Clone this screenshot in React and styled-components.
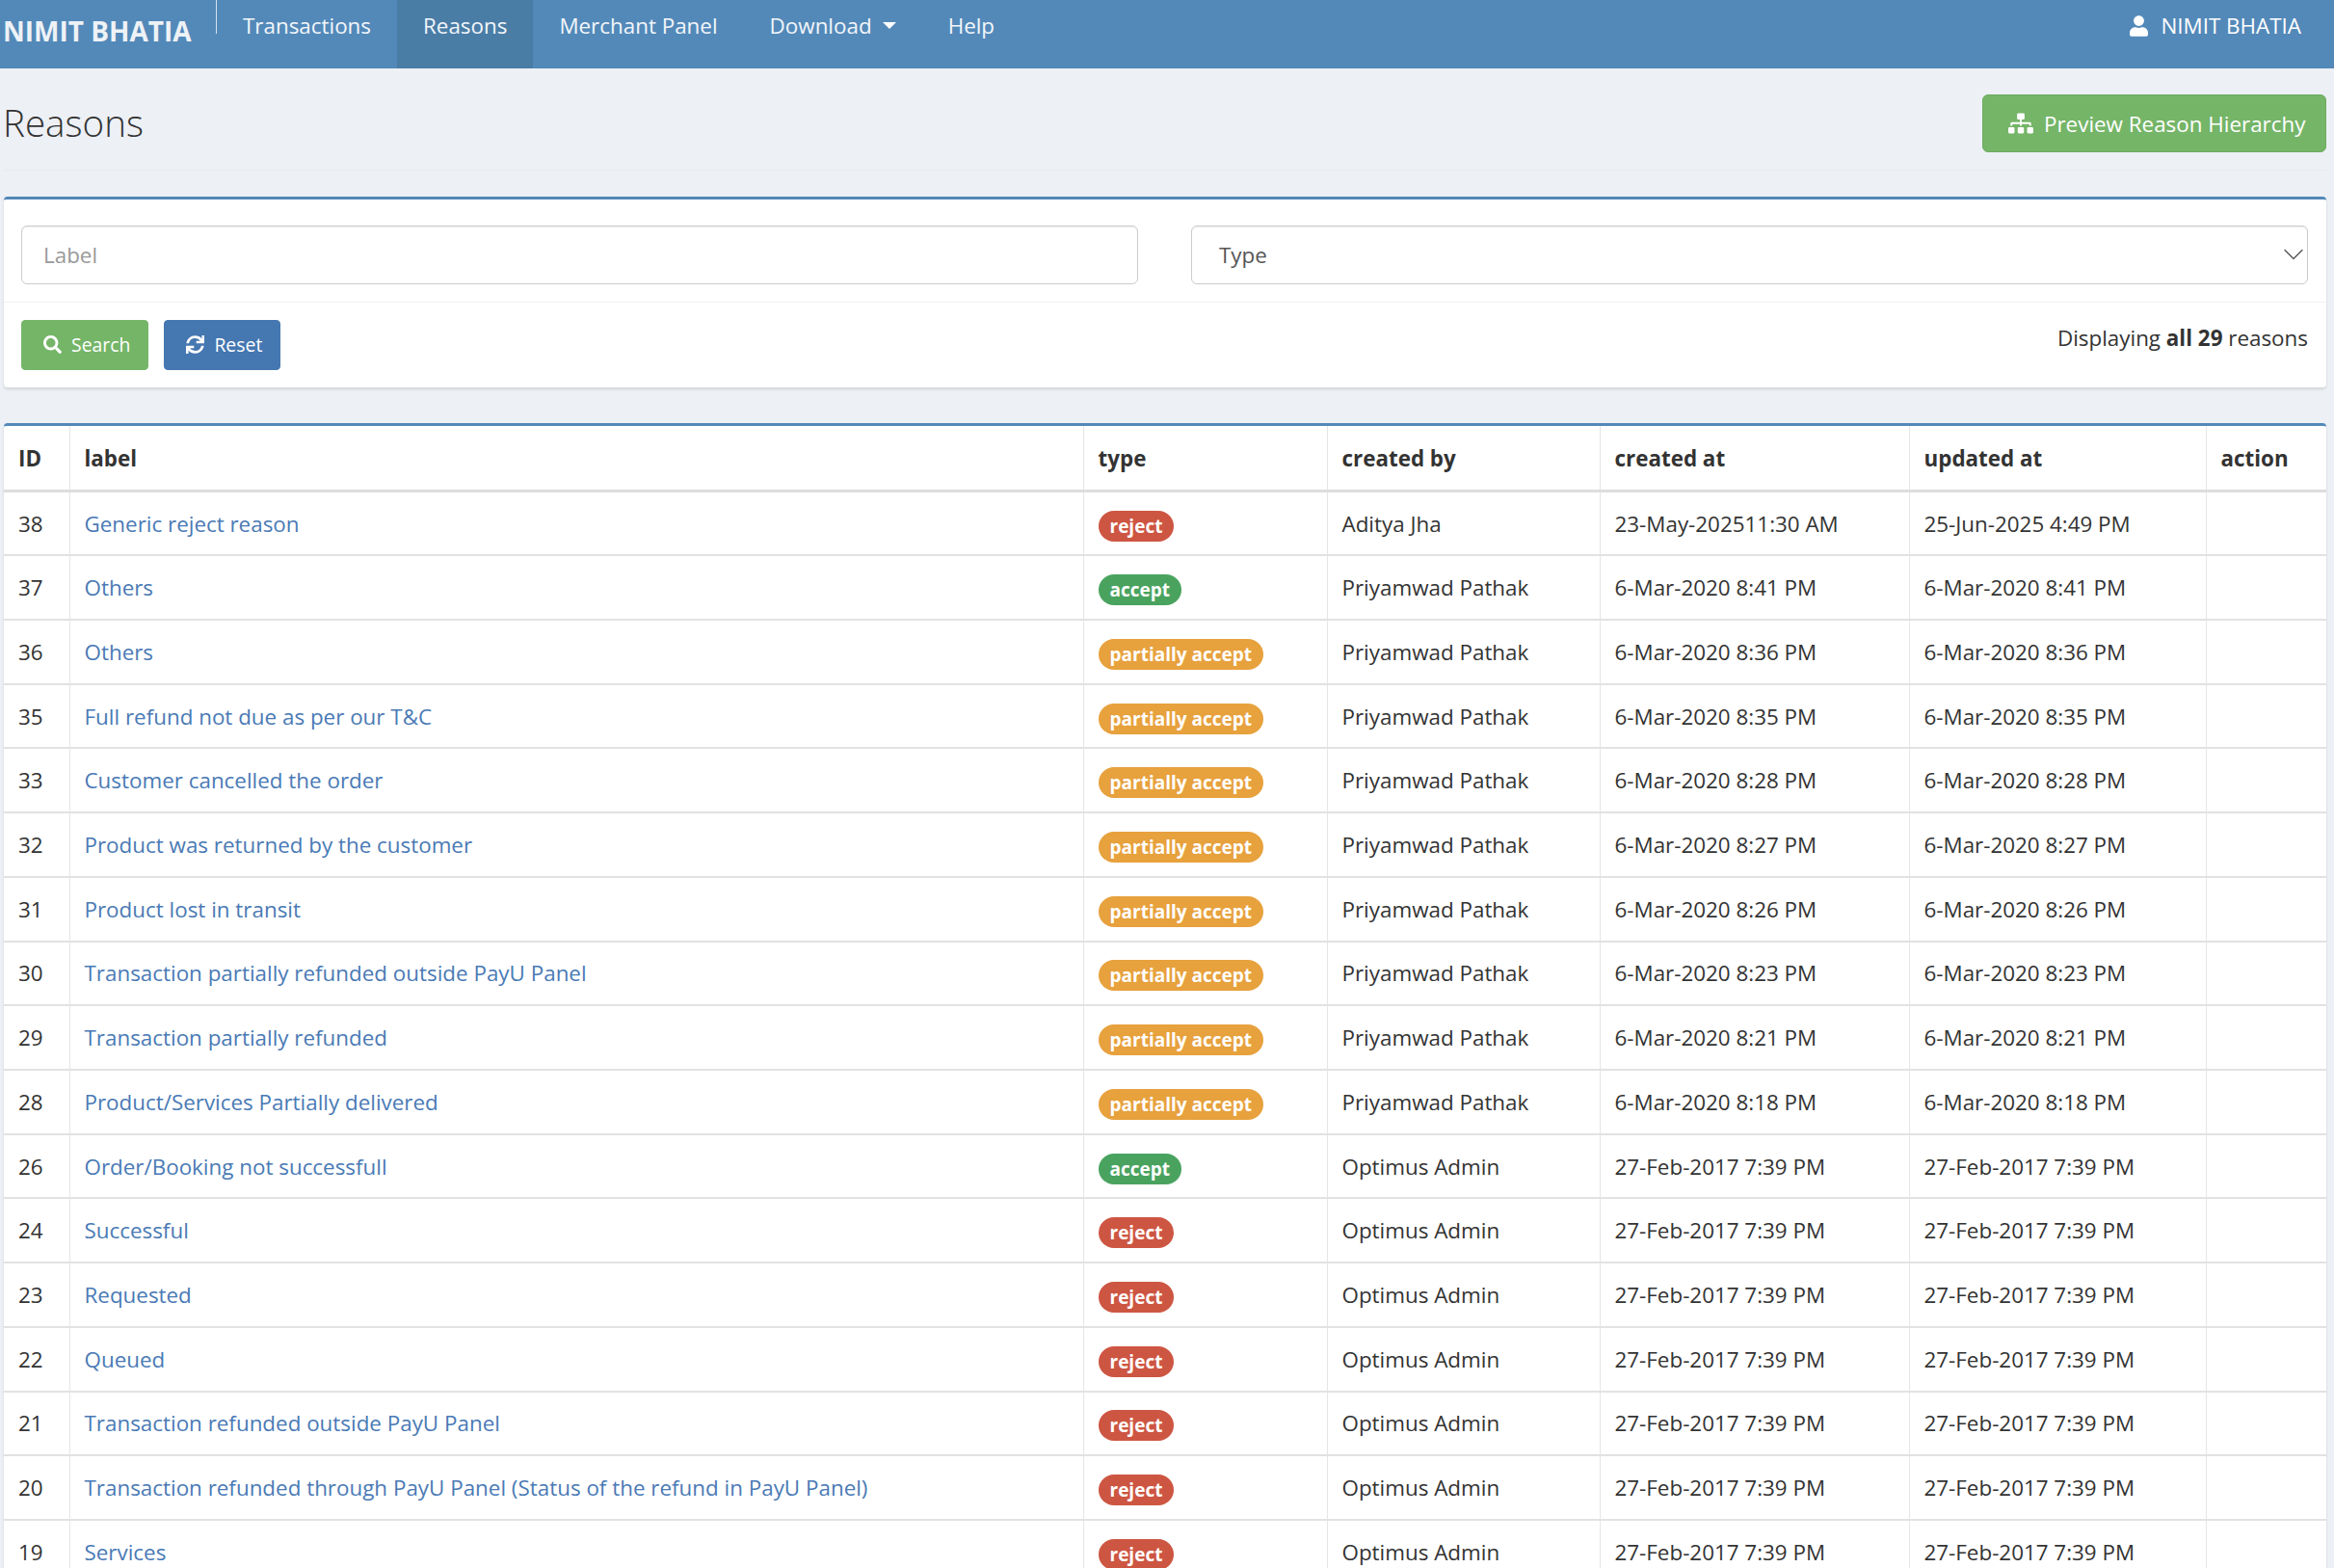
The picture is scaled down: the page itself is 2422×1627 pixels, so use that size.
import styled, { createGlobalStyle } from "styled-components";
import { FaSearch, FaSync, FaSitemap, FaUser } from "react-icons/fa";
import { ChevronDown } from "lucide-react";

const GlobalStyle = createGlobalStyle`
  html, body {
    margin: 0;
    height: 100%;
    overflow: hidden;
    background: #edf0f5;
  }
  body {
    font-family: "Open Sans", Lato, sans-serif;
    font-size: 22.4px;
    color: #333;
  }
`;

const Navbar = styled.nav`
  display: flex;
  height: 71px;
  background: #5389b9;
  color: #fff;
`;

const Brand = styled.a`
  width: 221px;
  padding-left: 3px;
  font-size: 28px;
  font-weight: 700;
  line-height: 64px;
  color: #eef2f6;
  white-space: nowrap;
`;

const NavLink = styled.a`
  display: flex;
  align-items: center;
  gap: 11px;
  height: 53px;
  padding: 0 27px;
  color: #f2f6fa;
  white-space: nowrap;
  ${(p) => p.$active && "height: 71px; padding-bottom: 18px; box-sizing: border-box; background: #4a7da6;"}
`;

const NavDivider = styled.span`
  width: 1px;
  height: 35px;
  background: #d5e2ee;
`;

const Caret = styled.span`
  border-left: 7px solid transparent;
  border-right: 7px solid transparent;
  border-top: 7px solid #fff;
`;

const UserMenu = styled.div`
  display: flex;
  align-items: center;
  gap: 13px;
  height: 53px;
  margin-left: auto;
  padding-right: 34px;
  svg {
    width: 19px;
    height: 22px;
  }
`;

const Page = styled.main`
  padding: 0 8px 0 4px;
`;

const TitleRow = styled.header`
  display: flex;
  align-items: flex-start;
  justify-content: space-between;
  height: 106px;
  padding-top: 27px;
  box-sizing: border-box;
  border-bottom: 1px solid #eceaea;
`;

const Title = styled.h1`
  margin: 0 0 0 -1px;
  font-size: 38.6px;
  font-weight: 300;
  line-height: 58px;
  color: #333;
`;

const PreviewButton = styled.button`
  display: flex;
  align-items: center;
  gap: 11px;
  width: 357px;
  height: 60px;
  padding: 0 0 0 26px;
  box-sizing: border-box;
  background: #75b568;
  border: 1px solid #6cab60;
  border-radius: 6px;
  color: #fff;
  font: inherit;
  white-space: nowrap;
  svg {
    width: 26px;
    height: 22px;
  }
`;

const Panel = styled.section`
  margin-top: ${(p) => p.$gap}px;
  background: #fff;
  border-top: 3px solid #5389b9;
  border-radius: 4px;
  box-shadow: 0 2px 3px rgba(0, 0, 0, 0.12);
`;

const FilterRow = styled.div`
  display: grid;
  grid-template-columns: 1159px 1159px;
  justify-content: space-between;
  padding: 27px 19px 18px 18px;
  border-bottom: 1px solid #f1f1f1;
`;

const TextInput = styled.input`
  height: 61px;
  padding: 0 22px;
  box-sizing: border-box;
  width: 100%;
  background: #fff;
  border: 1px solid #ccc;
  border-radius: 6px;
  font: inherit;
  box-shadow: inset 0 1px 1px rgba(0, 0, 0, 0.075);
  &::placeholder {
    color: #999;
  }
`;

const SelectWrap = styled.div`
  position: relative;
  svg {
    position: absolute;
    top: 12px;
    right: -3px;
    width: 36px;
    height: 36px;
    color: #555;
    stroke-width: 0.9;
  }
`;

const TypeSelect = styled.select`
  appearance: none;
  width: 100%;
  height: 61px;
  padding: 0 28px;
  background: #fff;
  border: 1px solid #ccc;
  border-radius: 6px;
  font: inherit;
  color: #555;
  box-shadow: inset 0 1px 1px rgba(0, 0, 0, 0.075);
`;

const ActionRow = styled.div`
  display: flex;
  gap: 16px;
  height: 88px;
  padding: 18px 19px 0 18px;
  box-sizing: border-box;
`;

const ActionButton = styled.button`
  display: flex;
  align-items: center;
  gap: 10px;
  height: 52px;
  padding: 0 18px 2px 22px;
  box-sizing: border-box;
  background: ${(p) => p.$bg};
  border: 1px solid ${(p) => p.$bg};
  border-radius: 4px;
  color: #fff;
  font: inherit;
  font-size: 19.4px;
  svg {
    width: 19px;
    height: 19px;
  }
`;

const ResultCount = styled.div`
  margin-left: auto;
  line-height: 38px;
`;

const Table = styled.table`
  width: 100%;
  table-layout: fixed;
  border-collapse: collapse;
`;

const HeadCell = styled.th`
  height: 66px;
  padding: 0 15px;
  text-align: left;
  font-weight: 700;
  border-left: 1px solid #e6e6e6;
  border-bottom: 3px solid #ddd;
  &:first-child {
    border-left: 0;
  }
`;

const Row = styled.tr`
  height: 66.73px;
`;

const Cell = styled.td`
  padding: 0 15px;
  white-space: nowrap;
  border-left: 1px solid #e6e6e6;
  border-bottom: 2px solid #e2e2e2;
  &:first-child {
    border-left: 0;
  }
`;

const ReasonLink = styled.a`
  color: #4a7ab5;
`;

const BADGE_COLOURS = {
  reject: "#cd5642",
  accept: "#49a35f",
  "partially accept": "#e7a13d",
};

const Badge = styled.span`
  display: inline-block;
  position: relative;
  top: 2px;
  height: 32px;
  padding: 0 12px;
  background: ${(p) => BADGE_COLOURS[p.$type]};
  border-radius: 16px;
  color: #fff;
  font-size: 19px;
  font-weight: 700;
  line-height: 32px;
`;

const PARTIAL = "partially accept";
const PRIYAMWAD = "Priyamwad Pathak";
const OPTIMUS = "Optimus Admin";
const FEB = "27-Feb-2017 7:39 PM";

const reasons = [
  [38, "Generic reject reason", "reject", "Aditya Jha", "23-May-202511:30 AM", "25-Jun-2025 4:49 PM"],
  [37, "Others", "accept", PRIYAMWAD, "6-Mar-2020 8:41 PM", "6-Mar-2020 8:41 PM"],
  [36, "Others", PARTIAL, PRIYAMWAD, "6-Mar-2020 8:36 PM", "6-Mar-2020 8:36 PM"],
  [35, "Full refund not due as per our T&C", PARTIAL, PRIYAMWAD, "6-Mar-2020 8:35 PM", "6-Mar-2020 8:35 PM"],
  [33, "Customer cancelled the order", PARTIAL, PRIYAMWAD, "6-Mar-2020 8:28 PM", "6-Mar-2020 8:28 PM"],
  [32, "Product was returned by the customer", PARTIAL, PRIYAMWAD, "6-Mar-2020 8:27 PM", "6-Mar-2020 8:27 PM"],
  [31, "Product lost in transit", PARTIAL, PRIYAMWAD, "6-Mar-2020 8:26 PM", "6-Mar-2020 8:26 PM"],
  [30, "Transaction partially refunded outside PayU Panel", PARTIAL, PRIYAMWAD, "6-Mar-2020 8:23 PM", "6-Mar-2020 8:23 PM"],
  [29, "Transaction partially refunded", PARTIAL, PRIYAMWAD, "6-Mar-2020 8:21 PM", "6-Mar-2020 8:21 PM"],
  [28, "Product/Services Partially delivered", PARTIAL, PRIYAMWAD, "6-Mar-2020 8:18 PM", "6-Mar-2020 8:18 PM"],
  [26, "Order/Booking not successfull", "accept", OPTIMUS, FEB, FEB],
  [24, "Successful", "reject", OPTIMUS, FEB, FEB],
  [23, "Requested", "reject", OPTIMUS, FEB, FEB],
  [22, "Queued", "reject", OPTIMUS, FEB, FEB],
  [21, "Transaction refunded outside PayU Panel", "reject", OPTIMUS, FEB, FEB],
  [20, "Transaction refunded through PayU Panel (Status of the refund in PayU Panel)", "reject", OPTIMUS, FEB, FEB],
  [19, "Services", "reject", OPTIMUS, FEB, FEB],
];

const columns = [
  ["ID", 68],
  ["label", 1052],
  ["type", 253],
  ["created by", 283],
  ["created at", 321],
  ["updated at", 308],
  ["action", 125],
];

export default function App() {
  return (
    <>
      <GlobalStyle />
      <Navbar>
        <Brand>NIMIT BHATIA</Brand>
        <NavDivider />
        <NavLink>Transactions</NavLink>
        <NavLink $active>Reasons</NavLink>
        <NavLink>Merchant Panel</NavLink>
        <NavLink>
          Download <Caret />
        </NavLink>
        <NavLink>Help</NavLink>
        <UserMenu>
          <FaUser />
          NIMIT BHATIA
        </UserMenu>
      </Navbar>
      <Page>
        <TitleRow>
          <Title>Reasons</Title>
          <PreviewButton>
            <FaSitemap />
            Preview Reason Hierarchy
          </PreviewButton>
        </TitleRow>
        <Panel $gap={27}>
          <FilterRow>
            <TextInput placeholder="Label" />
            <SelectWrap>
              <TypeSelect defaultValue="">
                <option value="">Type</option>
              </TypeSelect>
              <ChevronDown />
            </SelectWrap>
          </FilterRow>
          <ActionRow>
            <ActionButton $bg="#75b568">
              <FaSearch />
              Search
            </ActionButton>
            <ActionButton $bg="#4577b1">
              <FaSync />
              Reset
            </ActionButton>
            <ResultCount>
              Displaying <b>all 29</b> reasons
            </ResultCount>
          </ActionRow>
        </Panel>
        <Panel $gap={37}>
          <Table>
            <colgroup>
              {columns.map(([name, width]) => (
                <col key={name} width={width} />
              ))}
            </colgroup>
            <thead>
              <tr>
                {columns.map(([name]) => (
                  <HeadCell key={name}>{name}</HeadCell>
                ))}
              </tr>
            </thead>
            <tbody>
              {reasons.map(([id, label, type, by, created, updated]) => (
                <Row key={id}>
                  <Cell>{id}</Cell>
                  <Cell>
                    <ReasonLink>{label}</ReasonLink>
                  </Cell>
                  <Cell>
                    <Badge $type={type}>{type}</Badge>
                  </Cell>
                  <Cell>{by}</Cell>
                  <Cell>{created}</Cell>
                  <Cell>{updated}</Cell>
                  <Cell />
                </Row>
              ))}
            </tbody>
          </Table>
        </Panel>
      </Page>
    </>
  );
}
